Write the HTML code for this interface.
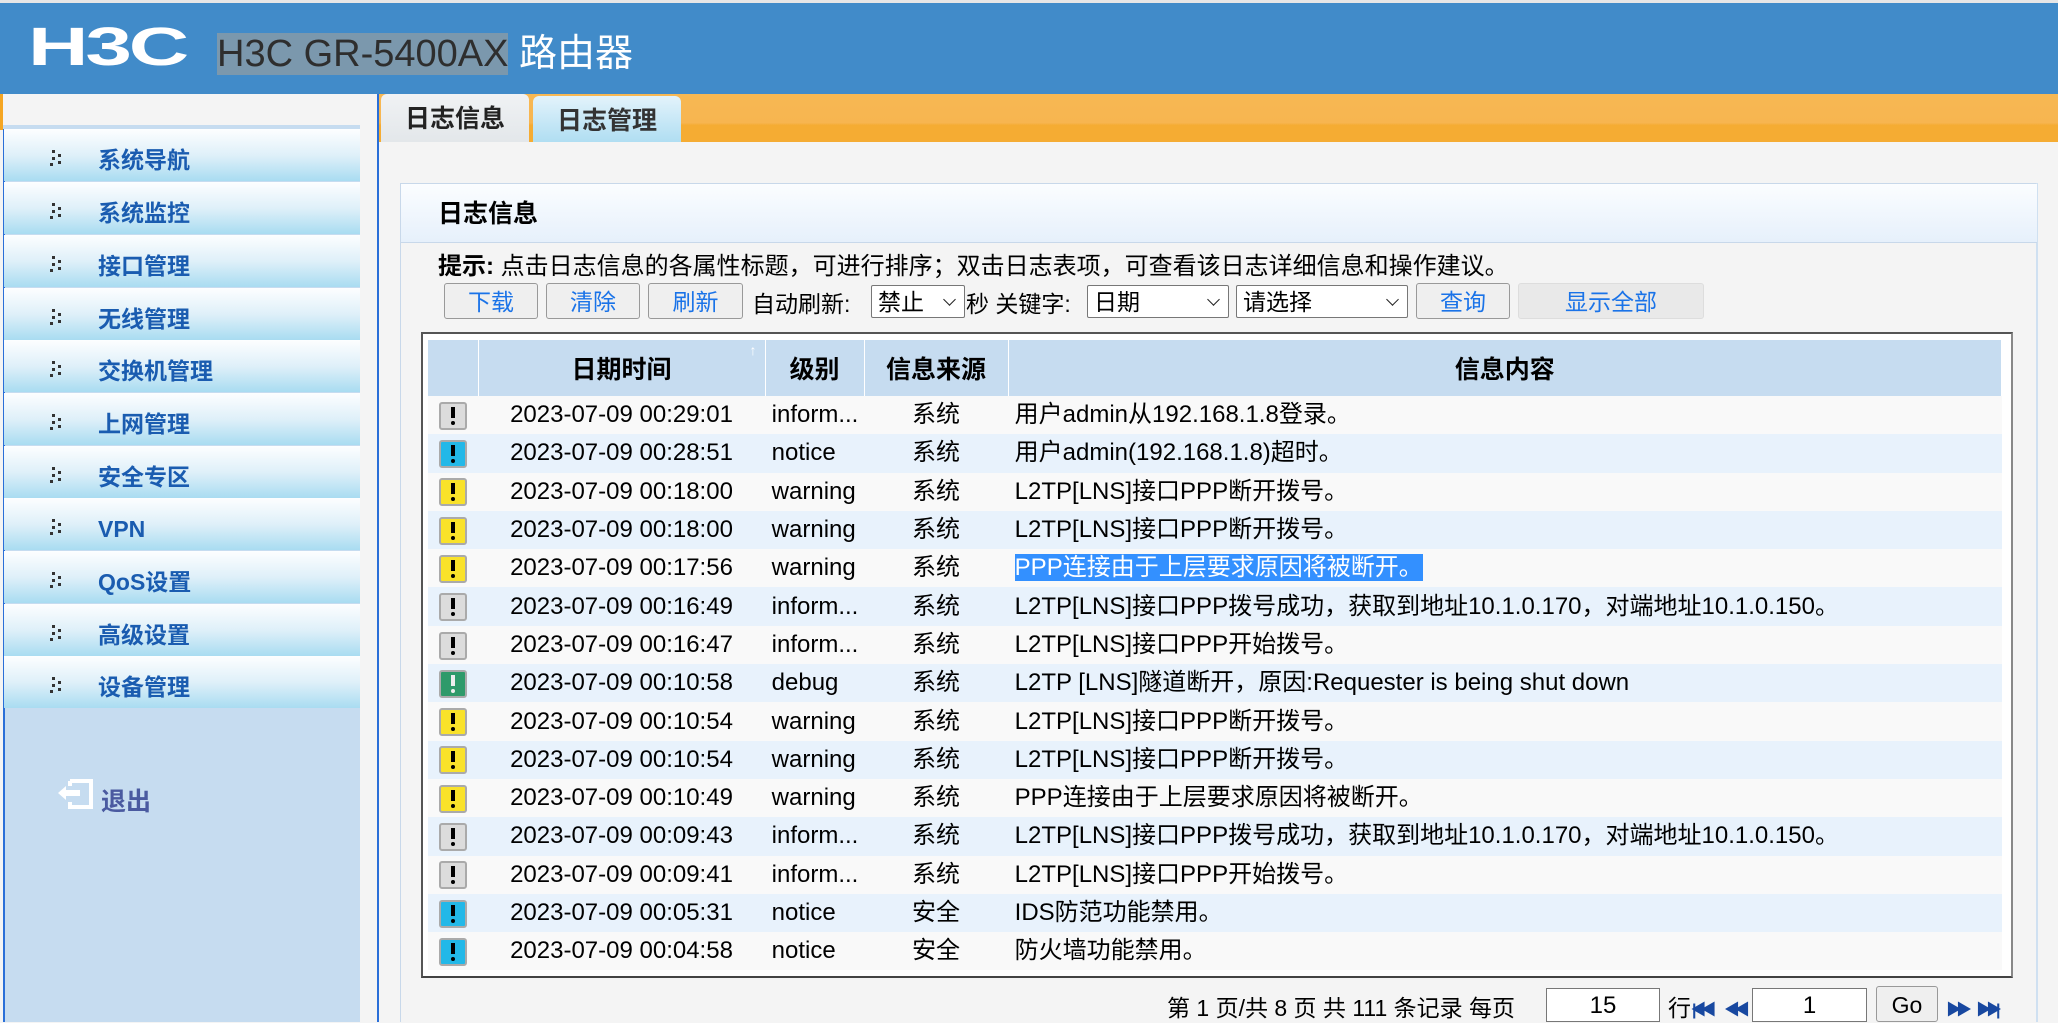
<!DOCTYPE html>
<html><head><meta charset="utf-8"><style>
*{margin:0;padding:0;box-sizing:border-box}
body{width:2058px;height:1022px;overflow:hidden;background:#f4f4f4;font-family:"Liberation Sans","Noto Sans CJK SC",sans-serif;position:relative;color:#000}
.a{position:absolute}
#hdr{left:0;top:0;width:2058px;height:94px;background:#418bc9;border-top:3px solid #e6e6e6}
#logo{left:28px;top:16px;font:bold 54px "Liberation Sans",sans-serif;color:#fff;letter-spacing:-2px;transform:scaleX(1.55);transform-origin:left}
#title{left:217px;top:33px;font-size:38px;color:#fff;white-space:nowrap;line-height:42px}
#title span{background:#7b98ad;color:#2e2e2e}
#side{left:3px;top:94px;width:357px;height:928px;background:#c6dcf0;border-left:2px solid #2a6fd8}
#sidetop{left:3px;top:94px;width:357px;height:31px;background:#f4f4f4}
#sideline{left:3px;top:125px;width:357px;height:4px;background:#c6dcf0}
.mi{position:absolute;left:4px;width:356px;height:52px;background:linear-gradient(#fdfeff,#dff0f9 50%,#a9dcf1);font-weight:bold;font-size:23px;color:#1a5cb0;line-height:52px;padding-left:94px}
.mi span{position:relative;top:5px}
.mi i{position:absolute;left:46px;top:21px;width:18px;height:16px;font-style:normal}
.mi i b{position:absolute;width:3px;height:3px;background:#333}
#orange{left:0;top:94px;width:4px;height:36px;background:#f5a623}
#vline{left:377px;top:94px;width:2px;height:928px;background:#2a6fd8}
#tabbar{left:379px;top:94px;width:1679px;height:48px;background:linear-gradient(#f7b853,#f7b550 60%,#f5ac33 65%,#f5ac33)}
.tab{position:absolute;top:0;height:48px;font-weight:bold;font-size:25px;line-height:50px;text-align:center;color:#222;border-radius:6px 6px 0 0}
#panel{left:400px;top:183px;width:1638px;height:839px;border:1px solid #c8d8ea;border-bottom:none;background:#f4f4f4}
#ph{left:401px;top:184px;width:1636px;height:59px;background:linear-gradient(#fbfdff,#e6f0fb);border-bottom:1px solid #c8d8ea;font-weight:bold;font-size:25px;line-height:60px;padding-left:37px}
#hint{left:438px;top:246px;font-size:24px;white-space:nowrap}
.btn{position:absolute;top:283px;height:36px;border:1px solid #999;border-radius:3px;background:#efefef;color:#1a73e8;font-size:23px;text-align:center;line-height:36px}
.lbl{position:absolute;top:285px;font-size:23px;white-space:nowrap}
.sel{position:absolute;top:285px;height:33px;border:1px solid #777;border-radius:2px;background:#fff;font-size:23px;line-height:33px;padding-left:6px}
.sel:after{content:"";position:absolute;right:10px;top:9px;width:8px;height:8px;border-right:1.5px solid #222;border-bottom:1.5px solid #222;transform:rotate(45deg)}
#tbl{left:421px;top:332px;width:1592px;height:646px;border:2px solid #555;border-right-color:#888;border-bottom-color:#444;background:#fff}
table{position:absolute;left:428px;top:340px;width:1574px;border-collapse:collapse;font-size:24px}
th{background:#c6dcf0;height:56px;font-size:25px;font-weight:bold;border-right:1px solid #fff}
td{height:38.3px;padding:0;white-space:nowrap;line-height:38px}
td.c{text-align:center}
tr:nth-child(odd) td{background:#e8f2fc}
tr.w td{background:#f9f9f9}
.ic{display:inline-block;width:28px;height:28px;border:2px solid #aaa;border-radius:3px;position:relative;vertical-align:middle}
.ic:after{content:"";position:absolute;left:10px;top:3px;width:4px;height:11px;background:#000}
.ic:before{content:"";position:absolute;left:10px;top:17px;width:4px;height:4px;background:#000;border-radius:2px}
.g{background:#dcdcdc}.b{background:#22b8e8}.y{background:#f9e22a}.gr{background:#2e9a6a}
.gr:after,.gr:before{background:#eee}
.hl{background:#3390ff;color:#fff}
#pg{left:1167px;top:989px;font-size:23px;white-space:nowrap}
.inp{position:absolute;top:988px;height:34px;border:1px solid #777;background:#fff;font-size:24px;text-align:center;line-height:34px}
.arr{position:absolute;top:996px;color:#1848a0;font-size:16px;letter-spacing:-6px;font-weight:bold}
#rline{left:2036px;top:183px;width:2px;height:839px;background:#cfe0f1}
</style></head><body>
<div class="a" id="hdr"></div>
<div class="a" id="logo">H3C</div>
<div class="a" id="title"><span>H3C GR-5400AX</span> 路由器</div>
<div class="a" id="orange"></div>
<div class="a" id="side"></div>
<div class="a" id="sidetop"></div>
<div class="a" id="sideline"></div>
<div class="mi" style="top:129px"><i><b style="left:2px;top:0"></b><b style="left:8px;top:4px"></b><b style="left:2px;top:7px"></b><b style="left:8px;top:11px"></b><b style="left:0;top:13px"></b></i><span>系统导航</span></div>
<div class="mi" style="top:182px"><i><b style="left:2px;top:0"></b><b style="left:8px;top:4px"></b><b style="left:2px;top:7px"></b><b style="left:8px;top:11px"></b><b style="left:0;top:13px"></b></i><span>系统监控</span></div>
<div class="mi" style="top:235px"><i><b style="left:2px;top:0"></b><b style="left:8px;top:4px"></b><b style="left:2px;top:7px"></b><b style="left:8px;top:11px"></b><b style="left:0;top:13px"></b></i><span>接口管理</span></div>
<div class="mi" style="top:288px"><i><b style="left:2px;top:0"></b><b style="left:8px;top:4px"></b><b style="left:2px;top:7px"></b><b style="left:8px;top:11px"></b><b style="left:0;top:13px"></b></i><span>无线管理</span></div>
<div class="mi" style="top:340px"><i><b style="left:2px;top:0"></b><b style="left:8px;top:4px"></b><b style="left:2px;top:7px"></b><b style="left:8px;top:11px"></b><b style="left:0;top:13px"></b></i><span>交换机管理</span></div>
<div class="mi" style="top:393px"><i><b style="left:2px;top:0"></b><b style="left:8px;top:4px"></b><b style="left:2px;top:7px"></b><b style="left:8px;top:11px"></b><b style="left:0;top:13px"></b></i><span>上网管理</span></div>
<div class="mi" style="top:446px"><i><b style="left:2px;top:0"></b><b style="left:8px;top:4px"></b><b style="left:2px;top:7px"></b><b style="left:8px;top:11px"></b><b style="left:0;top:13px"></b></i><span>安全专区</span></div>
<div class="mi" style="top:498px"><i><b style="left:2px;top:0"></b><b style="left:8px;top:4px"></b><b style="left:2px;top:7px"></b><b style="left:8px;top:11px"></b><b style="left:0;top:13px"></b></i><span>VPN</span></div>
<div class="mi" style="top:551px"><i><b style="left:2px;top:0"></b><b style="left:8px;top:4px"></b><b style="left:2px;top:7px"></b><b style="left:8px;top:11px"></b><b style="left:0;top:13px"></b></i><span>QoS设置</span></div>
<div class="mi" style="top:604px"><i><b style="left:2px;top:0"></b><b style="left:8px;top:4px"></b><b style="left:2px;top:7px"></b><b style="left:8px;top:11px"></b><b style="left:0;top:13px"></b></i><span>高级设置</span></div>
<div class="mi" style="top:656px"><i><b style="left:2px;top:0"></b><b style="left:8px;top:4px"></b><b style="left:2px;top:7px"></b><b style="left:8px;top:11px"></b><b style="left:0;top:13px"></b></i><span>设备管理</span></div>
<svg class="a" style="left:56px;top:778px" width="38" height="32" viewBox="0 0 38 32"><path d="M14 3H35V29H14V24M14 8V3" fill="none" stroke="#fff" stroke-width="4"/><path d="M2 15L10 8V12H24V18H10V22Z" fill="#fff"/></svg>
<div class="a" style="left:101px;top:782px;font-size:25px;font-weight:bold;color:#4a5aa0">退出</div>
<div class="a" id="vline"></div>
<div class="a" id="tabbar"></div>
<div class="tab" style="left:381px;width:148px;top:94px;background:linear-gradient(#f0f2f4,#e3e7ea)">日志信息</div>
<div class="tab" style="left:533px;width:148px;top:96px;height:46px;background:linear-gradient(#e3f3fb,#b0def2);color:#333">日志管理</div>
<div class="a" id="panel"></div>
<div class="a" id="rline"></div>
<div class="a" id="ph">日志信息</div>
<div class="a" id="hint"><b>提示:</b> 点击日志信息的各属性标题，可进行排序；双击日志表项，可查看该日志详细信息和操作建议。</div>
<div class="btn" style="left:444px;width:94px">下载</div>
<div class="btn" style="left:546px;width:94px">清除</div>
<div class="btn" style="left:648px;width:95px">刷新</div>
<div class="lbl" style="left:752px">自动刷新:</div>
<div class="sel" style="left:871px;width:94px">禁止</div>
<div class="lbl" style="left:966px">秒 关键字:</div>
<div class="sel" style="left:1087px;width:142px">日期</div>
<div class="sel" style="left:1236px;width:172px">请选择</div>
<div class="btn" style="left:1416px;width:94px">查询</div>
<div class="btn" style="left:1518px;width:186px;border-color:#ddd;background:#e9e9e9">显示全部</div>
<div class="a" id="tbl"></div>
<table>
<tr><th style="width:50px"></th><th style="width:287px;position:relative">日期时间<span style="position:absolute;right:8px;top:2px;color:#fff;font-size:14px">↑</span></th><th style="width:99px">级别</th><th style="width:144px">信息来源</th><th>信息内容</th></tr>
<tr class="w"><td class="c"><span class="ic g"></span></td><td class="c">2023-07-09 00:29:01</td><td>&nbsp;inform...</td><td class="c">系统</td><td>&nbsp;用户admin从192.168.1.8登录。</td></tr>
<tr><td class="c"><span class="ic b"></span></td><td class="c">2023-07-09 00:28:51</td><td>&nbsp;notice</td><td class="c">系统</td><td>&nbsp;用户admin(192.168.1.8)超时。</td></tr>
<tr class="w"><td class="c"><span class="ic y"></span></td><td class="c">2023-07-09 00:18:00</td><td>&nbsp;warning</td><td class="c">系统</td><td>&nbsp;L2TP[LNS]接口PPP断开拨号。</td></tr>
<tr><td class="c"><span class="ic y"></span></td><td class="c">2023-07-09 00:18:00</td><td>&nbsp;warning</td><td class="c">系统</td><td>&nbsp;L2TP[LNS]接口PPP断开拨号。</td></tr>
<tr class="w"><td class="c"><span class="ic y"></span></td><td class="c">2023-07-09 00:17:56</td><td>&nbsp;warning</td><td class="c">系统</td><td>&nbsp;<span class="hl">PPP连接由于上层要求原因将被断开。</span></td></tr>
<tr><td class="c"><span class="ic g"></span></td><td class="c">2023-07-09 00:16:49</td><td>&nbsp;inform...</td><td class="c">系统</td><td>&nbsp;L2TP[LNS]接口PPP拨号成功，获取到地址10.1.0.170，对端地址10.1.0.150。</td></tr>
<tr class="w"><td class="c"><span class="ic g"></span></td><td class="c">2023-07-09 00:16:47</td><td>&nbsp;inform...</td><td class="c">系统</td><td>&nbsp;L2TP[LNS]接口PPP开始拨号。</td></tr>
<tr><td class="c"><span class="ic gr"></span></td><td class="c">2023-07-09 00:10:58</td><td>&nbsp;debug</td><td class="c">系统</td><td>&nbsp;L2TP [LNS]隧道断开，原因:Requester is being shut down</td></tr>
<tr class="w"><td class="c"><span class="ic y"></span></td><td class="c">2023-07-09 00:10:54</td><td>&nbsp;warning</td><td class="c">系统</td><td>&nbsp;L2TP[LNS]接口PPP断开拨号。</td></tr>
<tr><td class="c"><span class="ic y"></span></td><td class="c">2023-07-09 00:10:54</td><td>&nbsp;warning</td><td class="c">系统</td><td>&nbsp;L2TP[LNS]接口PPP断开拨号。</td></tr>
<tr class="w"><td class="c"><span class="ic y"></span></td><td class="c">2023-07-09 00:10:49</td><td>&nbsp;warning</td><td class="c">系统</td><td>&nbsp;PPP连接由于上层要求原因将被断开。</td></tr>
<tr><td class="c"><span class="ic g"></span></td><td class="c">2023-07-09 00:09:43</td><td>&nbsp;inform...</td><td class="c">系统</td><td>&nbsp;L2TP[LNS]接口PPP拨号成功，获取到地址10.1.0.170，对端地址10.1.0.150。</td></tr>
<tr class="w"><td class="c"><span class="ic g"></span></td><td class="c">2023-07-09 00:09:41</td><td>&nbsp;inform...</td><td class="c">系统</td><td>&nbsp;L2TP[LNS]接口PPP开始拨号。</td></tr>
<tr><td class="c"><span class="ic b"></span></td><td class="c">2023-07-09 00:05:31</td><td>&nbsp;notice</td><td class="c">安全</td><td>&nbsp;IDS防范功能禁用。</td></tr>
<tr class="w"><td class="c"><span class="ic b"></span></td><td class="c">2023-07-09 00:04:58</td><td>&nbsp;notice</td><td class="c">安全</td><td>&nbsp;防火墙功能禁用。</td></tr>
</table>
<div class="a" id="pg">第 1 页/共 8 页 共 111 条记录 每页</div>
<div class="inp" style="left:1546px;width:114px">15</div>
<div class="a" style="left:1668px;top:989px;font-size:23px">行</div>
<div class="arr" style="left:1692px">|◀◀</div>
<div class="arr" style="left:1724px">◀◀</div>
<div class="inp" style="left:1752px;width:115px">1</div>
<div class="btn" style="left:1876px;top:986px;width:62px;color:#000;height:36px">Go</div>
<div class="arr" style="left:1946px">▶▶</div>
<div class="arr" style="left:1976px">▶▶|</div>
</body></html>
